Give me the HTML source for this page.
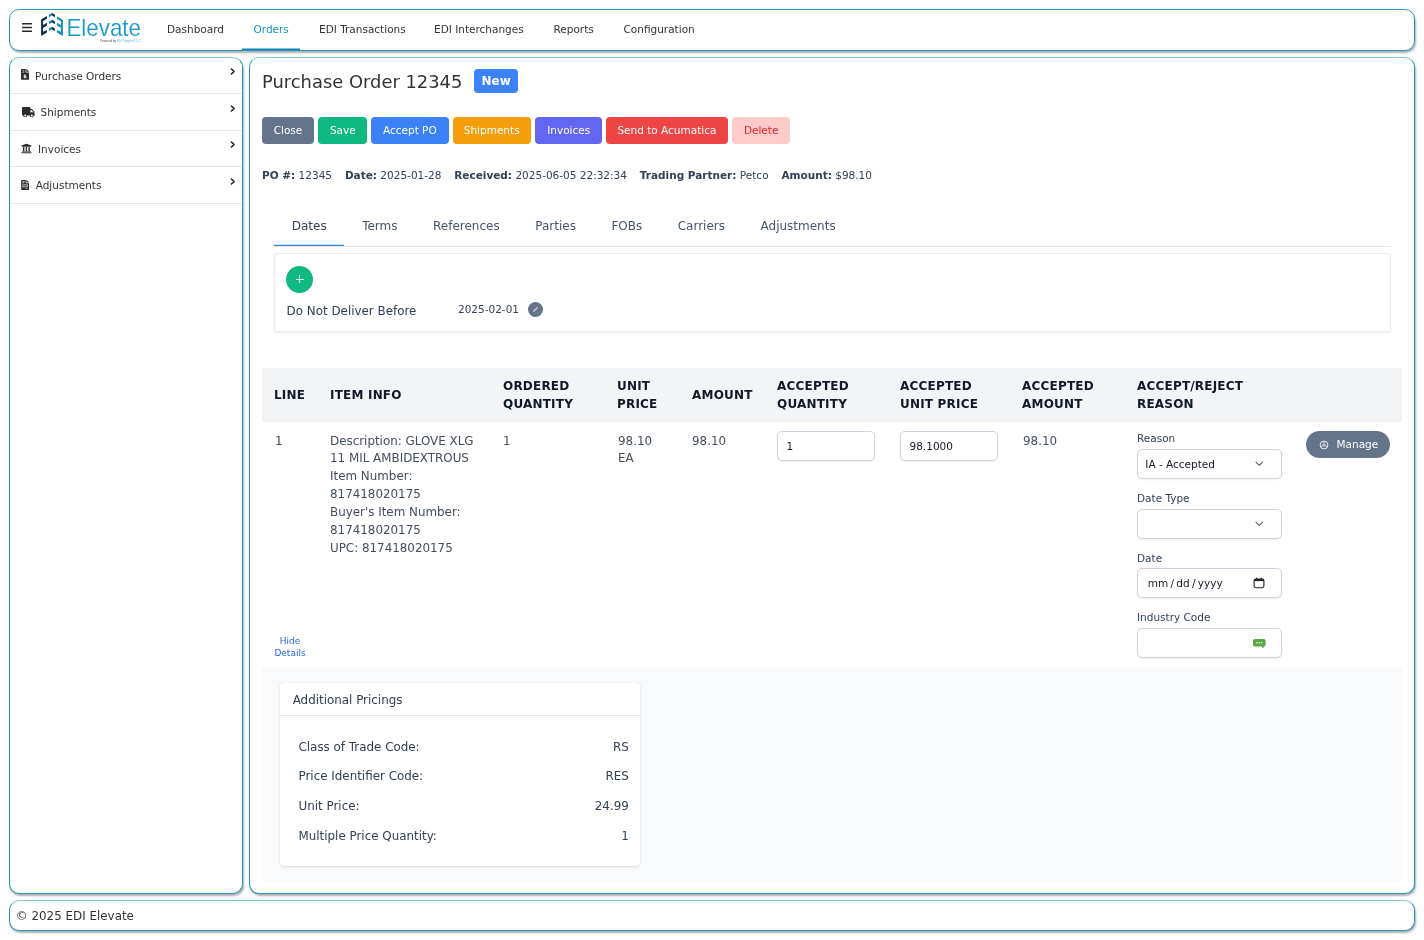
<!DOCTYPE html>
<html lang="en">
<head>
<meta charset="utf-8">
<title>Purchase Order 12345</title>
<style>
*{box-sizing:border-box;margin:0;padding:0}
html,body{width:1424px;height:940px;overflow:hidden;background:#fff}
body{font-family:"DejaVu Sans","Liberation Sans",sans-serif;color:#334155;position:relative;font-size:12px}
#app{position:absolute;left:0;top:0;width:1424px;height:940px;will-change:transform}
.panel{position:absolute;background:#fff;border:1px solid #2798bf;border-radius:10px;box-shadow:1px 2px 2px rgba(40,40,60,.38)}
#hdr{left:9px;top:9px;width:1406px;height:42px}
#side{left:9px;top:57px;width:234px;height:837px;overflow:hidden;border-top-color:#85c8dd}
#main{left:249px;top:57px;width:1166px;height:837px;border-top-color:#85c8dd}
#foot{left:9px;top:900px;width:1406px;height:31px;font-size:11.9px;line-height:31px;padding-left:5.8px;color:#333;border-top-color:#85c8dd}
/* header */
#burger{position:absolute;left:11.6px;top:11px;width:12px;height:12px}
#logo{position:absolute;left:28px;top:0;width:110px;height:40px}
.nav{position:absolute;top:0;height:40px;font-size:10.5px;line-height:38px;color:#333;white-space:nowrap}
.nav.act{color:#1592c4}
.nav.act:after{content:"";position:absolute;left:-11.5px;right:-11.5px;bottom:0;height:2px;background:linear-gradient(rgba(0,137,183,.5) 0,rgba(0,137,183,.5) 1px,#0089b7 1px)}
/* sidebar */
.sitem{position:relative;height:36.67px;border-bottom:1px solid #e5e7eb;font-size:10.5px;line-height:37.4px;color:#333;padding-left:25px;white-space:nowrap}
.sitem svg.ic{position:absolute}
.sitem:first-child{height:36px;line-height:36px}
.sitem:not(:first-child) .chev{top:9.5px}
.sitem .chev{position:absolute;right:6px;top:9px;width:6px;height:9px}
/* main */
h1{position:absolute;left:12px;top:12px;font-size:17.9px;font-weight:400;color:#333;line-height:24px;white-space:nowrap}
.badge{position:absolute;left:224.2px;top:11px;width:44px;height:24px;border-radius:4px;background:#3b82f6;color:#fff;font-weight:700;font-size:12px;line-height:25.6px;text-align:center}
.btns{position:absolute;left:12px;top:59px;height:27px;white-space:nowrap;font-size:0}
.btn{position:absolute;top:0;height:27px;line-height:27px;text-align:center;border-radius:4px;color:#fff;font-size:10.5px}
.meta{position:absolute;left:12px;top:109px;font-size:10.5px;line-height:16px;white-space:nowrap;color:#334155}
.meta b{font-weight:700}
.meta span{margin-right:12.85px}

/* tabs */
.tabs{position:absolute;left:24px;top:148px;width:1117px;height:41px;border-bottom:1px solid #e5e7eb;white-space:nowrap;font-size:0}
.tab{display:inline-block;height:40px;line-height:40px;padding:0 17.75px;font-size:12px;color:#475569;position:relative}
.tab.act{color:#334155}
.tab.act:after{content:"";position:absolute;left:0;right:0;bottom:0;height:1px;background:#3b82f6;box-shadow:0 -1px 0 rgba(59,130,246,.25)}
.dbox{position:absolute;left:24px;top:195px;width:1117px;height:79px;border:1px solid #eaecf0;border-radius:3px;box-shadow:0 1px 3px rgba(0,0,0,.08);background:#fff}
.plus{position:absolute;left:11.2px;top:11.8px;width:27px;height:27px;border-radius:50%;background:#10b981}
.plus:before,.plus:after{content:"";position:absolute;background:#fff}
.plus:before{left:9.5px;top:13px;width:8px;height:1px;opacity:.85}
.plus:after{left:13px;top:9.5px;width:1px;height:8px;opacity:.85}
.dlabel{position:absolute;left:11.6px;top:48px;font-size:11.9px;line-height:18px;color:#334155;white-space:nowrap}
.dval{position:absolute;left:183px;top:47px;font-size:10.5px;line-height:16px;color:#334155;white-space:nowrap}
.pen{position:absolute;left:253px;top:48px;width:15px;height:15px;border-radius:50%;background:#64748b}
/* table */
.thead{position:absolute;left:12px;top:310px;width:1140px;height:54px;background:#f3f4f6}
.th{position:absolute;font-size:12px;font-weight:700;letter-spacing:.2px;line-height:18px;color:#111827;white-space:nowrap}
.td{position:absolute;font-size:11.9px;line-height:17.85px;color:#444e5c;white-space:nowrap}
.inp{position:absolute;height:29.5px;border:1px solid #cdd4de;border-radius:5px;background:#fff;box-shadow:0 1px 2px rgba(18,18,23,.07);font-size:10.5px;line-height:29px;color:#141a24;padding-left:8.5px;white-space:nowrap}
.lab{position:absolute;left:887px;font-size:10.5px;line-height:14px;color:#334155;white-space:nowrap}
.manage{position:absolute;left:1056px;top:373px;width:84px;height:27px;border-radius:14px;background:#64748b;color:#fff;font-size:10.5px;line-height:27px;padding-left:30.5px}
.manage .cog{position:absolute;left:13px;top:8.5px}
.inp .sch{position:absolute;left:116.7px;top:11.4px}
.inp .cal{position:absolute;left:114.5px;top:7.5px}
.inp .grn{position:absolute;left:115px;top:10px}
.inp i{font-style:normal;margin:0 2.3px}
.hide{position:absolute;left:14px;top:578.4px;width:52px;text-align:center;font-size:9px;line-height:11.8px;color:#2563eb}
.drow{position:absolute;left:12px;top:610px;width:1140px;height:212.6px;background:#f9fafb}
.card{position:absolute;left:18px;top:15px;width:360px;height:182.5px;background:#fff;border-radius:4px;box-shadow:0 1px 3px rgba(0,0,0,.12),0 0 1px rgba(0,0,0,.08)}
.card .hd{height:33px;border-bottom:1px solid #e5e7eb;padding-left:12.7px;font-size:11.9px;line-height:34.2px;color:#334155}
.kv{position:absolute;left:18.5px;right:11.2px;height:18px;font-size:11.9px;line-height:18px;color:#334155}
.kv span{position:absolute;right:0;top:0}
</style>
</head>
<body>
<div id="app">
<div class="panel" id="hdr">
  <svg id="burger" width="12" height="12" viewBox="0 0 12 12"><rect x="0" y="2.1" width="10" height="1.5" rx=".3" fill="#262626"/><rect x="0" y="5.85" width="10" height="1.5" rx=".3" fill="#262626"/><rect x="0" y="9.6" width="10" height="1.5" rx=".3" fill="#262626"/></svg>
  <svg id="logo" viewBox="38 10 110 40" width="110" height="40"><path fill="#0b2e4f" d="M41.1 19.6 L46.9 16 V18.7 L43 21.3 V25 L46.9 22.8 V25.5 L43 27.9 V31.8 L46.9 29.9 V32.5 L41.1 35.9Z"/><path fill="#1390c0" d="M62.9 19.9 L56.9 16.2 V18.9 L60.9 21.3 V25 L56.9 22.8 V25.5 L60.9 27.7 V31.8 L56.9 30 V32.5 L62.9 35.9Z"/><polygon fill="#1390c0" points="49,14.4 52,12.9 52,15.6 49,17.2"/><polygon fill="#0b2e4f" points="52,12.9 54.9,14.5 54.9,17.2 52,15.6"/><polygon fill="#1390c0" points="49,21.3 52,19.8 52,22.5 49,24.1"/><polygon fill="#0b2e4f" points="52,19.8 54.9,21.4 54.9,24.1 52,22.5"/><polygon fill="#1390c0" points="49,28.3 52,26.8 52,29.5 49,31.1"/><polygon fill="#0b2e4f" points="52,26.8 54.9,28.4 54.9,31.1 52,29.5"/><text x="66.4" y="35.9" font-family="Liberation Sans,Arial,sans-serif" font-size="23.6" fill="#1597c7" stroke="#fff" stroke-width="0.15" textLength="74.6" lengthAdjust="spacingAndGlyphs">Elevate</text><text x="100" y="42.1" font-family="Liberation Sans,Arial,sans-serif" font-size="3.2" textLength="40" lengthAdjust="spacingAndGlyphs"><tspan fill="#4b5563">Powered by </tspan><tspan fill="#5bb4d8">EDI Support LLC</tspan></text></svg>
  <div class="nav" style="left:157px">Dashboard</div>
  <div class="nav act" style="left:243.5px">Orders</div>
  <div class="nav" style="left:309px">EDI Transactions</div>
  <div class="nav" style="left:424px">EDI Interchanges</div>
  <div class="nav" style="left:543.5px">Reports</div>
  <div class="nav" style="left:613.5px">Configuration</div>
</div>
<div class="panel" id="side">
  <div class="sitem"><svg class="ic" style="left:11.3px;top:11.2px" width="8" height="10.9" viewBox="0 0 384 512"><path fill="#2b2b2b" d="M377 105L279.1 7c-4.5-4.500-10.600-7-17-7H256v128h128v-6.100c0-6.300-2.500-12.400-7-16.900zm-153 31V0H24C10.700 0 0 10.700 0 24v464c0 13.300 10.700 24 24 24h336c13.300 0 24-10.700 24-24V160H248c-13.200 0-24-10.800-24-24z"/><path fill="#fff" d="M64 72c0-4.420 3.580-8 8-8h80c4.420 0 8 3.580 8 8v16c0 4.420-3.580 8-8 8H72c-4.420 0-8-3.580-8-8V72zm0 64c0-4.420 3.580-8 8-8h80c4.420 0 8 3.580 8 8v16c0 4.420-3.580 8-8 8H72c-4.420 0-8-3.580-8-8v-16z"/><text x="192" y="430" font-size="240" font-weight="700" text-anchor="middle" fill="#fff" font-family="DejaVu Sans,Liberation Sans,sans-serif">$</text></svg>Purchase Orders<svg class="chev" viewBox="0 0 6 9"><path d="M1.4 2 L4.1 4.5 L1.4 7" fill="none" stroke="#222" stroke-width="1.65" stroke-linecap="round" stroke-linejoin="round"/></svg></div>
  <div class="sitem" style="padding-left:30.5px"><svg class="ic" style="left:11.5px;top:12.9px" width="13" height="10.4" viewBox="0 0 640 512"><path fill="#2b2b2b" d="M624 352h-16V243.900c0-12.700-5.100-24.900-14.100-33.900L494 110.100c-9-9-21.200-14.100-33.900-14.100H416V48c0-26.500-21.500-48-48-48H48C21.500 0 0 21.500 0 48v320c0 26.500 21.500 48 48 48h16c0 53 43 96 96 96s96-43 96-96h128c0 53 43 96 96 96s96-43 96-96h48c8.800 0 16-7.200 16-16v-32c0-8.800-7.200-16-16-16zM160 464c-26.500 0-48-21.500-48-48s21.500-48 48-48 48 21.500 48 48-21.500 48-48 48zm320 0c-26.500 0-48-21.500-48-48s21.500-48 48-48 48 21.500 48 48-21.500 48-48 48zm80-208H416V144h44.100l99.900 99.900V256z"/></svg>Shipments<svg class="chev" viewBox="0 0 6 9"><path d="M1.4 2 L4.1 4.5 L1.4 7" fill="none" stroke="#222" stroke-width="1.65" stroke-linecap="round" stroke-linejoin="round"/></svg></div>
  <div class="sitem" style="padding-left:28px"><svg class="ic" style="left:11.35px;top:12.23px" width="10.9" height="10.9" viewBox="0 0 512 512"><path fill="#2b2b2b" d="M496 128v16a8 8 0 0 1-8 8h-24v12c0 6.627-5.373 12-12 12H60c-6.627 0-12-5.373-12-12v-12H24a8 8 0 0 1-8-8v-16a8 8 0 0 1 4.941-7.392l232-88a7.996 7.996 0 0 1 6.118 0l232 88A8 8 0 0 1 496 128zm-24 304H40c-13.255 0-24 10.745-24 24v16a8 8 0 0 0 8 8h464a8 8 0 0 0 8-8v-16c0-13.255-10.745-24-24-24zM96 192v192H60c-6.627 0-12 5.373-12 12v20h416v-20c0-6.627-5.373-12-12-12h-36V192h-64v192h-64V192h-64v192h-64V192H96z"/></svg>Invoices<svg class="chev" viewBox="0 0 6 9"><path d="M1.4 2 L4.1 4.5 L1.4 7" fill="none" stroke="#222" stroke-width="1.65" stroke-linecap="round" stroke-linejoin="round"/></svg></div>
  <div class="sitem" style="padding-left:25.7px"><svg class="ic" style="left:11.1px;top:12.2px" width="8.2" height="10.4" viewBox="0 0 384 512"><path fill="#2b2b2b" d="M288 256H96v64h192v-64zm89-151L279.100 7c-4.500-4.500-10.600-7-17-7H256v128h128v-6.100c0-6.300-2.500-12.400-7-16.900zm-153 31V0H24C10.700 0 0 10.700 0 24v464c0 13.300 10.700 24 24 24h336c13.300 0 24-10.700 24-24V160H248c-13.200 0-24-10.800-24-24zM64 72c0-4.420 3.580-8 8-8h80c4.420 0 8 3.580 8 8v16c0 4.420-3.580 8-8 8H72c-4.420 0-8-3.580-8-8V72zm0 64c0-4.420 3.580-8 8-8h80c4.420 0 8 3.580 8 8v16c0 4.420-3.580 8-8 8H72c-4.420 0-8-3.580-8-8v-16zm256 304c0 4.420-3.580 8-8 8h-80c-4.420 0-8-3.580-8-8v-16c0-4.420 3.580-8 8-8h80c4.420 0 8 3.580 8 8v16zm0-200v96c0 8.840-7.160 16-16 16H80c-8.840 0-16-7.160-16-16v-96c0-8.840 7.160-16 16-16h224c8.840 0 16 7.160 16 16z"/></svg>Adjustments<svg class="chev" viewBox="0 0 6 9"><path d="M1.4 2 L4.1 4.5 L1.4 7" fill="none" stroke="#222" stroke-width="1.65" stroke-linecap="round" stroke-linejoin="round"/></svg></div>
</div>
<div class="panel" id="main">
  <h1>Purchase Order 12345</h1>
  <div class="badge">New</div>
  <div class="btns"><span class="btn" style="left:0.0px;width:52.0px;background:#64748b;color:#fff">Close</span><span class="btn" style="left:56.1px;width:49.4px;background:#10b981;color:#fff">Save</span><span class="btn" style="left:109.0px;width:77.7px;background:#3b82f6;color:#fff">Accept PO</span><span class="btn" style="left:190.6px;width:78.2px;background:#f59e0b;color:#fff">Shipments</span><span class="btn" style="left:273.2px;width:67.0px;background:#6366f1;color:#fff">Invoices</span><span class="btn" style="left:343.9px;width:122.1px;background:#ef4444;color:#fff">Send to Acumatica</span><span class="btn" style="left:470.3px;width:57.7px;background:#fecaca;color:#dc2626">Delete</span></div>
  <div class="meta"><span><b>PO #:</b> 12345</span><span><b>Date:</b> 2025-01-28</span><span><b>Received:</b> 2025-06-05 22:32:34</span><span><b>Trading Partner:</b> Petco</span><span><b>Amount:</b> $98.10</span></div>

  <div class="tabs"><span class="tab act">Dates</span><span class="tab">Terms</span><span class="tab">References</span><span class="tab">Parties</span><span class="tab">FOBs</span><span class="tab">Carriers</span><span class="tab">Adjustments</span></div>
  <div class="dbox">
    <div class="plus"></div>
    <div class="dlabel">Do Not Deliver Before</div>
    <div class="dval">2025-02-01</div>
    <div class="pen"><svg width="15" height="15" viewBox="0 0 15 15"><path d="M4.9 10.1 L5.3 8.6 L9.1 4.8 L10.2 5.9 L6.4 9.7 Z" fill="#b9c2cf"/></svg></div>
  </div>
  <div class="thead">
    <div class="th" style="left:12px;top:18px">LINE</div>
    <div class="th" style="left:68px;top:18px">ITEM INFO</div>
    <div class="th" style="left:241px;top:9px">ORDERED<br>QUANTITY</div>
    <div class="th" style="left:355px;top:9px">UNIT<br>PRICE</div>
    <div class="th" style="left:430px;top:18px">AMOUNT</div>
    <div class="th" style="left:515px;top:9px">ACCEPTED<br>QUANTITY</div>
    <div class="th" style="left:638px;top:9px">ACCEPTED<br>UNIT PRICE</div>
    <div class="th" style="left:760px;top:9px">ACCEPTED<br>AMOUNT</div>
    <div class="th" style="left:875px;top:9px">ACCEPT/REJECT<br>REASON</div>
  </div>
  <div class="td" style="left:25px;top:374.6px">1</div>
  <div class="td" style="left:80px;top:374.6px">Description: GLOVE XLG<br>11 MIL AMBIDEXTROUS<br>Item Number:<br>817418020175<br>Buyer's Item Number:<br>817418020175<br>UPC: 817418020175</div>
  <div class="td" style="left:253px;top:374.6px">1</div>
  <div class="td" style="left:368px;top:374.6px">98.10<br>EA</div>
  <div class="td" style="left:442px;top:374.6px">98.10</div>
  <div class="inp" style="left:527px;top:373px;width:98px">1</div>
  <div class="inp" style="left:650px;top:373px;width:98px">98.1000</div>
  <div class="td" style="left:773px;top:374.6px">98.10</div>
  <div class="lab" style="top:373px">Reason</div>
  <div class="inp" style="left:887px;top:391px;width:145px;padding-left:7.3px">IA - Accepted<svg class="sch" width="8.6" height="5.7" viewBox="0 0 9 6"><path d="M1 1.2 L4.5 4.6 L8 1.2" fill="none" stroke="#555e6b" stroke-width="1.1" stroke-linecap="round" stroke-linejoin="round"/></svg></div>
  <div class="lab" style="top:432.7px">Date Type</div>
  <div class="inp" style="left:887px;top:451px;width:145px"><svg class="sch" width="8.6" height="5.7" viewBox="0 0 9 6"><path d="M1 1.2 L4.5 4.6 L8 1.2" fill="none" stroke="#555e6b" stroke-width="1.1" stroke-linecap="round" stroke-linejoin="round"/></svg></div>
  <div class="lab" style="top:493px">Date</div>
  <div class="inp" style="left:887px;top:510px;width:145px;height:30px;padding-left:9.7px;line-height:29px">mm<i>/</i>dd<i>/</i>yyyy<svg class="cal" width="12" height="12" viewBox="0 0 12 12"><rect x="1.1" y="2.1" width="9.8" height="8.6" rx="1.6" fill="none" stroke="#222" stroke-width="1.1"/><rect x="1.1" y="2.1" width="9.8" height="2" fill="#222"/><rect x="3" y="0.6" width="1.1" height="2" fill="#222"/><rect x="7.9" y="0.6" width="1.1" height="2" fill="#222"/></svg></div>
  <div class="lab" style="top:552.2px">Industry Code</div>
  <div class="inp" style="left:887px;top:570px;width:145px"><svg class="grn" width="13" height="10" viewBox="0 0 13 10"><rect x="0" y="0" width="12.6" height="7.6" rx="1.8" fill="#5aa846"/><path d="M8.6 7 L11.2 7 L9.8 9.4Z" fill="#5aa846"/><circle cx="4" cy="3.8" r=".75" fill="#fff"/><circle cx="6.3" cy="3.8" r=".75" fill="#fff"/><circle cx="8.6" cy="3.8" r=".75" fill="#fff"/></svg></div>
  <div class="manage"><svg class="cog" width="10" height="10" viewBox="0 0 10 10"><circle cx="5" cy="5" r="3.9" fill="none" stroke="#e8ebf0" stroke-width="1"/><circle cx="5" cy="5" r="1.2" fill="none" stroke="#e8ebf0" stroke-width=".8"/><path d="M5 1 V3.6 M1.5 7 L3.9 5.6 M8.5 7 L6.1 5.6" stroke="#e8ebf0" stroke-width=".8"/></svg>Manage</div>
  <div class="hide">Hide<br>Details</div>
  <div class="drow">
    <div class="card">
      <div class="hd">Additional Pricings</div>
      <div class="kv" style="top:54.5px">Class of Trade Code:<span>RS</span></div>
      <div class="kv" style="top:84.3px">Price Identifier Code:<span>RES</span></div>
      <div class="kv" style="top:114px">Unit Price:<span>24.99</span></div>
      <div class="kv" style="top:143.8px">Multiple Price Quantity:<span>1</span></div>
    </div>
  </div>
</div>
<div class="panel" id="foot">© 2025 EDI Elevate</div>
</div>
</body>
</html>
